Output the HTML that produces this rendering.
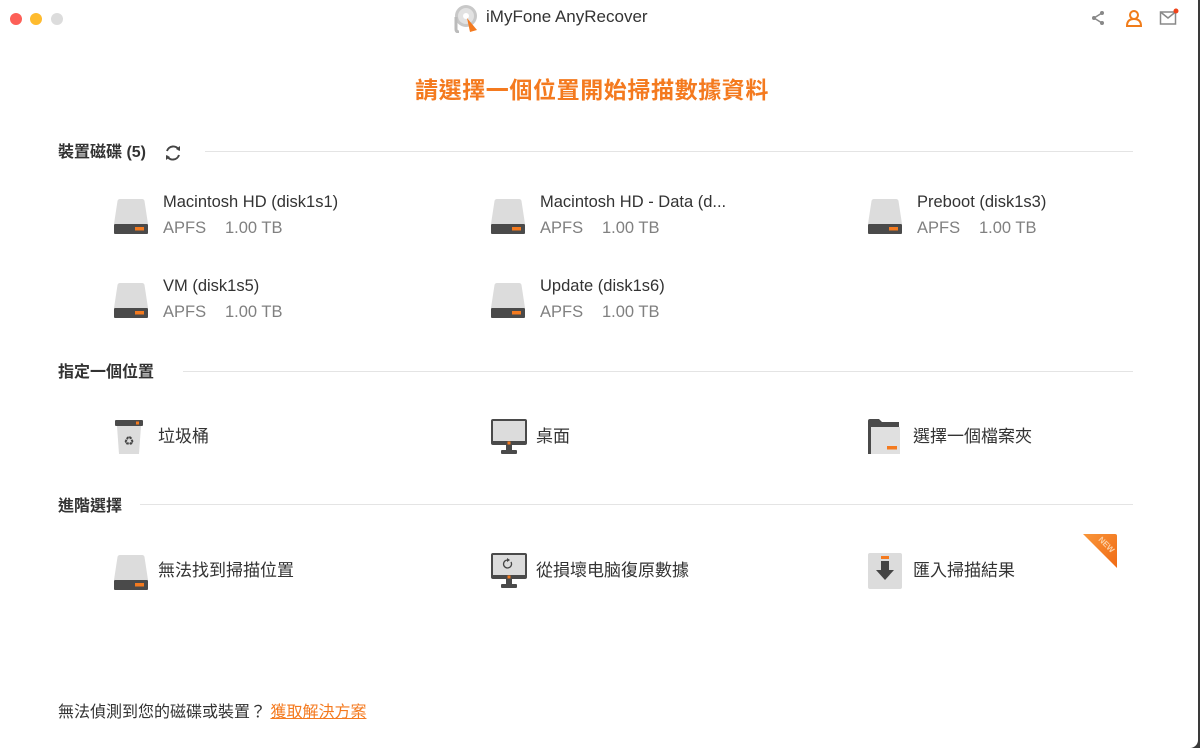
<!DOCTYPE html>
<html><head><meta charset="utf-8"><style>
*{margin:0;padding:0;box-sizing:border-box}
body{width:1200px;height:748px;background:#3a3a3a;overflow:hidden;font-family:"Liberation Sans","Noto Sans CJK TC",sans-serif;position:relative}
.win{position:absolute;left:0;top:0;width:1198px;height:748px;background:#fff;border-radius:0 0 8px 0}
.a{position:absolute;white-space:nowrap}
.dot{position:absolute;top:13px;width:12px;height:12px;border-radius:50%}
.h{font-size:16px;color:#333;font-weight:bold;line-height:20px}
.line{position:absolute;height:1px;background:#e4e4e4}
.n{font-size:16.5px;color:#333;line-height:20px}
.s{font-size:16.5px;color:#808080;line-height:20px}
.s span{display:inline-block;width:62px}
.lab{font-size:17px;color:#333;line-height:20px}
</style></head><body><div class="win">
<div class="dot" style="left:10px;background:#fd5f57"></div>
<div class="dot" style="left:30px;background:#febb2e"></div>
<div class="dot" style="left:51px;background:#dcdcdc"></div>
<svg class="a" style="left:453px;top:3px" width="28" height="30" viewBox="0 0 28 30">
<circle cx="13" cy="13" r="11" fill="#c8c8c8"/><circle cx="13" cy="13" r="8" fill="#e2e2e2"/><circle cx="13" cy="13" r="3" fill="#fff"/>
<path d="M3 14 V26 Q3 29 6 29" stroke="#bbb" stroke-width="3" fill="none"/>
<path d="M14 15 L24 27 L17 29 Z" fill="#f47a1f"/></svg>
<div class="a" style="left:486px;top:7px;font-size:17px;color:#333">iMyFone AnyRecover</div>
<svg class="a" style="left:1090px;top:10px" width="16" height="16" viewBox="0 0 16 16"><circle cx="12" cy="3" r="2" fill="#888"/><circle cx="4" cy="8" r="2" fill="#888"/><circle cx="12" cy="13" r="2" fill="#888"/><path d="M12 3 L4 8 L12 13" stroke="#888" stroke-width="1.5" fill="none"/></svg>
<svg class="a" style="left:1125px;top:9px" width="18" height="18" viewBox="0 0 18 18"><circle cx="9" cy="6" r="4" stroke="#f07c1a" stroke-width="2" fill="none"/><path d="M2 17 Q2 10 9 10 Q16 10 16 17 Z" stroke="#f07c1a" stroke-width="2" fill="none"/></svg>
<svg class="a" style="left:1159px;top:8px" width="20" height="18" viewBox="0 0 20 18"><rect x="1.5" y="4" width="15" height="12" stroke="#888" stroke-width="1.5" fill="none"/><path d="M1.5 4 L9 10 L16.5 4" stroke="#888" stroke-width="1.5" fill="none"/><circle cx="17" cy="3" r="2.5" fill="#f0441a"/></svg>

<div class="a" style="left:415px;top:71px;font-size:23px;font-weight:bold;color:#f47a1f;letter-spacing:0.6px">請選擇一個位置開始掃描數據資料</div>

<div class="a h" style="left:58px;top:143px">裝置磁碟 (5)</div>
<svg class="a" style="left:163px;top:143px" width="20" height="20" viewBox="0 0 20 20"><path d="M4 8 A6.5 6.5 0 0 1 16 7" stroke="#444" stroke-width="2" fill="none"/><path d="M16 12 A6.5 6.5 0 0 1 4 13" stroke="#444" stroke-width="2" fill="none"/><path d="M13 6 L17 3 L17 8 Z" fill="#444"/><path d="M7 14 L3 17 L3 12 Z" fill="#444"/></svg>
<div class="line" style="left:205px;top:151px;width:928px"></div>

<svg width="0" height="0" style="position:absolute"><defs>
<g id="disk"><path d="M6 2 H28 Q30 2 30.5 4 L34 27 H0 L3.5 4 Q4 2 6 2 Z" fill="#dcdcdc"/><rect x="0" y="27" width="34" height="10" rx="1" fill="#4a4a4a"/><rect x="21" y="30" width="9" height="3.5" fill="#f47a1f"/></g>
</defs></svg>

<svg class="a" style="left:114px;top:197px" width="34" height="38"><use href="#disk"/></svg>
<div class="a n" style="left:163px;top:192px">Macintosh HD (disk1s1)</div>
<div class="a s" style="left:163px;top:218px"><span>APFS</span>1.00 TB</div>
<svg class="a" style="left:491px;top:197px" width="34" height="38"><use href="#disk"/></svg>
<div class="a n" style="left:540px;top:192px">Macintosh HD - Data (d...</div>
<div class="a s" style="left:540px;top:218px"><span>APFS</span>1.00 TB</div>
<svg class="a" style="left:868px;top:197px" width="34" height="38"><use href="#disk"/></svg>
<div class="a n" style="left:917px;top:192px">Preboot (disk1s3)</div>
<div class="a s" style="left:917px;top:218px"><span>APFS</span>1.00 TB</div>
<svg class="a" style="left:114px;top:281px" width="34" height="38"><use href="#disk"/></svg>
<div class="a n" style="left:163px;top:276px">VM (disk1s5)</div>
<div class="a s" style="left:163px;top:302px"><span>APFS</span>1.00 TB</div>
<svg class="a" style="left:491px;top:281px" width="34" height="38"><use href="#disk"/></svg>
<div class="a n" style="left:540px;top:276px">Update (disk1s6)</div>
<div class="a s" style="left:540px;top:302px"><span>APFS</span>1.00 TB</div>

<div class="a h" style="left:58px;top:363px">指定一個位置</div>
<div class="line" style="left:183px;top:371px;width:950px"></div>

<svg class="a" style="left:114px;top:419px" width="30" height="36" viewBox="0 0 30 36"><rect x="1" y="1" width="28" height="6" rx="1" fill="#4a4a4a"/><rect x="22" y="2.5" width="3" height="3" fill="#f47a1f"/><path d="M3 7 H27 L25 35 H5 Z" fill="#dcdcdc"/><text x="15" y="26" font-size="12" text-anchor="middle" fill="#444" font-family="DejaVu Sans">♻</text></svg>
<div class="a lab" style="left:158px;top:427px">垃圾桶</div>
<svg class="a" style="left:491px;top:419px" width="36" height="36" viewBox="0 0 36 36"><rect x="0" y="0" width="36" height="26" rx="2" fill="#4a4a4a"/><rect x="2" y="2" width="32" height="20" fill="#dcdcdc"/><rect x="16.5" y="22.5" width="3" height="3" fill="#f47a1f"/><rect x="15" y="26" width="6" height="5" fill="#4a4a4a"/><rect x="10" y="31" width="16" height="4" rx="1" fill="#4a4a4a"/></svg>
<div class="a lab" style="left:536px;top:427px">桌面</div>
<svg class="a" style="left:868px;top:419px" width="34" height="36" viewBox="0 0 34 36"><path d="M0 2 Q0 0 2 0 H11 L14 3 H31 V10 H0 Z" fill="#4a4a4a"/><path d="M2 8 H32 V35 H2 Z" fill="#e0e0e0"/><rect x="0" y="6" width="3" height="29" fill="#4a4a4a"/><rect x="19" y="27" width="10" height="3.5" fill="#f47a1f"/></svg>
<div class="a lab" style="left:913px;top:427px">選擇一個檔案夾</div>

<div class="a h" style="left:58px;top:497px">進階選擇</div>
<div class="line" style="left:140px;top:504px;width:993px"></div>

<svg class="a" style="left:114px;top:553px" width="34" height="38"><use href="#disk"/></svg>
<div class="a lab" style="left:158px;top:561px">無法找到掃描位置</div>
<svg class="a" style="left:491px;top:553px" width="36" height="36" viewBox="0 0 36 36"><rect x="0" y="0" width="36" height="26" rx="2" fill="#4a4a4a"/><rect x="2" y="2" width="32" height="20" fill="#dcdcdc"/><path d="M20 9 A4 4 0 1 1 17 7" stroke="#444" stroke-width="1.3" fill="none"/><path d="M16 5 L19 7 L16 9Z" fill="#444"/><rect x="16.5" y="22.5" width="3" height="3" fill="#f47a1f"/><rect x="15" y="26" width="6" height="5" fill="#4a4a4a"/><rect x="10" y="31" width="16" height="4" rx="1" fill="#4a4a4a"/></svg>
<div class="a lab" style="left:536px;top:561px">從損壞电脑復原數據</div>
<svg class="a" style="left:868px;top:553px" width="34" height="36" viewBox="0 0 34 36"><rect x="0" y="0" width="34" height="36" rx="2" fill="#dcdcdc"/><rect x="13" y="3" width="8" height="3" fill="#f47a1f"/><rect x="13" y="8" width="8" height="10" fill="#444"/><path d="M8 17 H26 L17 27 Z" fill="#444"/></svg>
<div class="a lab" style="left:913px;top:561px">匯入掃描結果</div>
<svg class="a" style="left:1082px;top:533px" width="36" height="36" viewBox="0 0 36 36"><defs><linearGradient id="g" x1="0" y1="0" x2="1" y2="1"><stop offset="0" stop-color="#f9963a"/><stop offset="1" stop-color="#f06a14"/></linearGradient></defs><path d="M1 1 H33 Q35 1 35 3 V35 Z" fill="url(#g)"/><text x="0" y="0" font-size="8" font-weight="bold" fill="#fbd2a8" transform="translate(16,7) rotate(45)" font-family="Liberation Sans">NEW</text></svg>

<div class="a" style="left:58px;top:703px;font-size:16px;color:#333;line-height:20px">無法偵測到您的磁碟或裝置？ <span style="color:#f47a1f;text-decoration:underline">獲取解決方案</span></div>
</div></body></html>
